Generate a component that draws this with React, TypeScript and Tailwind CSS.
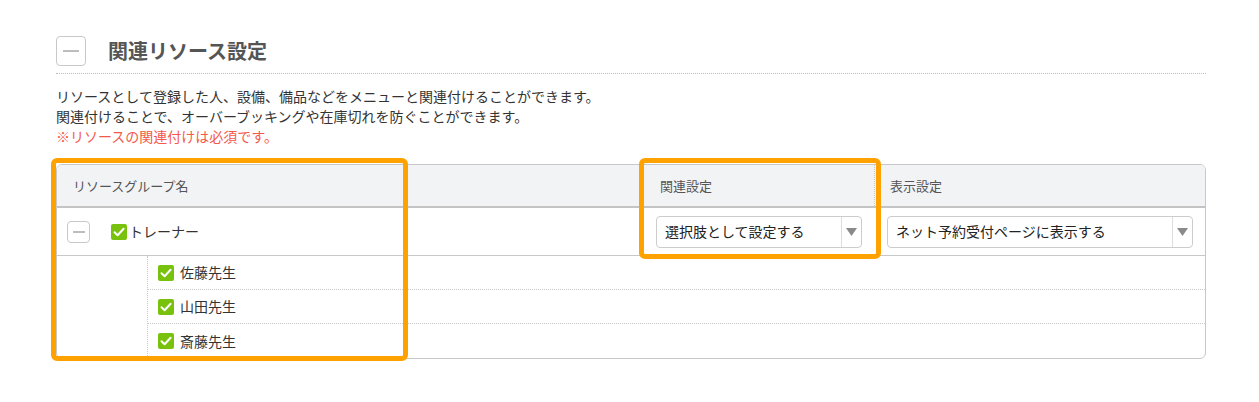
import React from 'react';

const font = { fontFamily: '"Noto Sans CJK JP", "Noto Sans", sans-serif' };

function MinusButton({ big }: { big?: boolean }) {
  return (
    <div
      className={
        big
          ? 'flex h-[30px] w-[30px] items-center justify-center rounded-[4px] border border-[#c9c9c9] bg-white'
          : 'flex h-[22px] w-[23px] items-center justify-center rounded-[4px] border border-[#c9c9c9] bg-white'
      }
    >
      <div className={big ? 'h-[2px] w-[16px] bg-[#bdbdbd]' : 'h-[2px] w-[12px] bg-[#bdbdbd]'} />
    </div>
  );
}

function Check() {
  return (
    <svg width="16" height="16" viewBox="0 0 16 16" className="shrink-0">
      <rect x="0" y="0" width="16" height="16" rx="2" fill="#78c10d" />
      <path d="M3.5 8.2 L6.6 11.2 L12.6 4.8" fill="none" stroke="#fff" strokeWidth="2" strokeLinecap="round" strokeLinejoin="round" />
    </svg>
  );
}

function Select({ label }: { label: string }) {
  return (
    <div className="flex h-[32px] w-full items-stretch rounded-[4px] border border-[#cccccc] bg-white">
      <div className="flex flex-1 items-center pl-[8px] text-[14px] text-[#222]">{label}</div>
      <div className="flex w-[20px] items-center justify-center border-l border-[#dddddd]">
        <svg width="11" height="8" viewBox="0 0 11 8">
          <path d="M0 0 H11 L5.5 8 Z" fill="#8a8a8a" />
        </svg>
      </div>
    </div>
  );
}

const staff = ['佐藤先生', '山田先生', '斎藤先生'];

export default function App() {
  return (
    <div className="min-h-[402px] bg-white pt-[36px]" style={font}>
      <div className="ml-[56px] w-[1150px]">
        <div className="flex items-center gap-[22px] border-b border-dotted border-[#bdbdbd] pb-[7px]">
          <MinusButton big />
          <h2 className="text-[20px] font-bold leading-[30px] text-[#555]">関連リソース設定</h2>
        </div>

        <div className="mt-[12px] text-[14px] leading-[20px] text-[#333]">
          <p>リソースとして登録した人、設備、備品などをメニューと関連付けることができます。</p>
          <p>関連付けることで、オーバーブッキングや在庫切れを防ぐことができます。</p>
          <p className="text-[#f4594c]">※リソースの関連付けは必須です。</p>
        </div>

        <div className="relative mt-[18px]">
          <div className="overflow-hidden rounded-[6px] border border-[#c8c8c8] text-[14px]">
            <div className="grid h-[43px] grid-cols-[587px_231px_1fr] border-b-2 border-[#c4c4c4] bg-[#f2f3f5] text-[13px] text-[#555]">
              <div className="flex items-center border-r border-dotted border-[#c8c8c8] pl-[16px]">リソースグループ名</div>
              <div className="flex items-center border-r border-dotted border-[#c8c8c8] pl-[16px]">関連設定</div>
              <div className="flex items-center pl-[15px]">表示設定</div>
            </div>

            <div className="grid h-[48px] grid-cols-[587px_231px_1fr] border-b border-[#c8c8c8] text-[#333]">
              <div className="flex items-center pl-[10px]">
                <MinusButton />
                <div className="ml-[21px] flex items-center gap-[2px]">
                  <Check />
                  <span>トレーナー</span>
                </div>
              </div>
              <div className="flex items-center pl-[12px] pr-[13px]">
                <Select label="選択肢として設定する" />
              </div>
              <div className="flex items-center pl-[12px] pr-[12px]">
                <Select label="ネット予約受付ページに表示する" />
              </div>
            </div>

            <div className="flex">
              <div className="w-[90px]" />
              <div className="flex-1 border-l border-dotted border-[#c8c8c8]">
                {staff.map((name, i) => (
                  <div
                    key={name}
                    className={
                      i < staff.length - 1
                        ? 'flex h-[34px] items-center gap-[6px] border-b border-dotted border-[#c8c8c8] pl-[10px] text-[#333]'
                        : 'flex h-[34px] items-center gap-[6px] pl-[10px] text-[#333]'
                    }
                  >
                    <Check />
                    <span>{name}</span>
                  </div>
                ))}
              </div>
            </div>
          </div>

          <div className="pointer-events-none absolute left-[-5px] top-[-6px] h-[203px] w-[357px] rounded-[6px] border-[5px] border-[#ffa200]" />
          <div className="pointer-events-none absolute left-[583px] top-[-6px] h-[101px] w-[242px] rounded-[6px] border-[5px] border-[#ffa200]" />
        </div>
      </div>
    </div>
  );
}
